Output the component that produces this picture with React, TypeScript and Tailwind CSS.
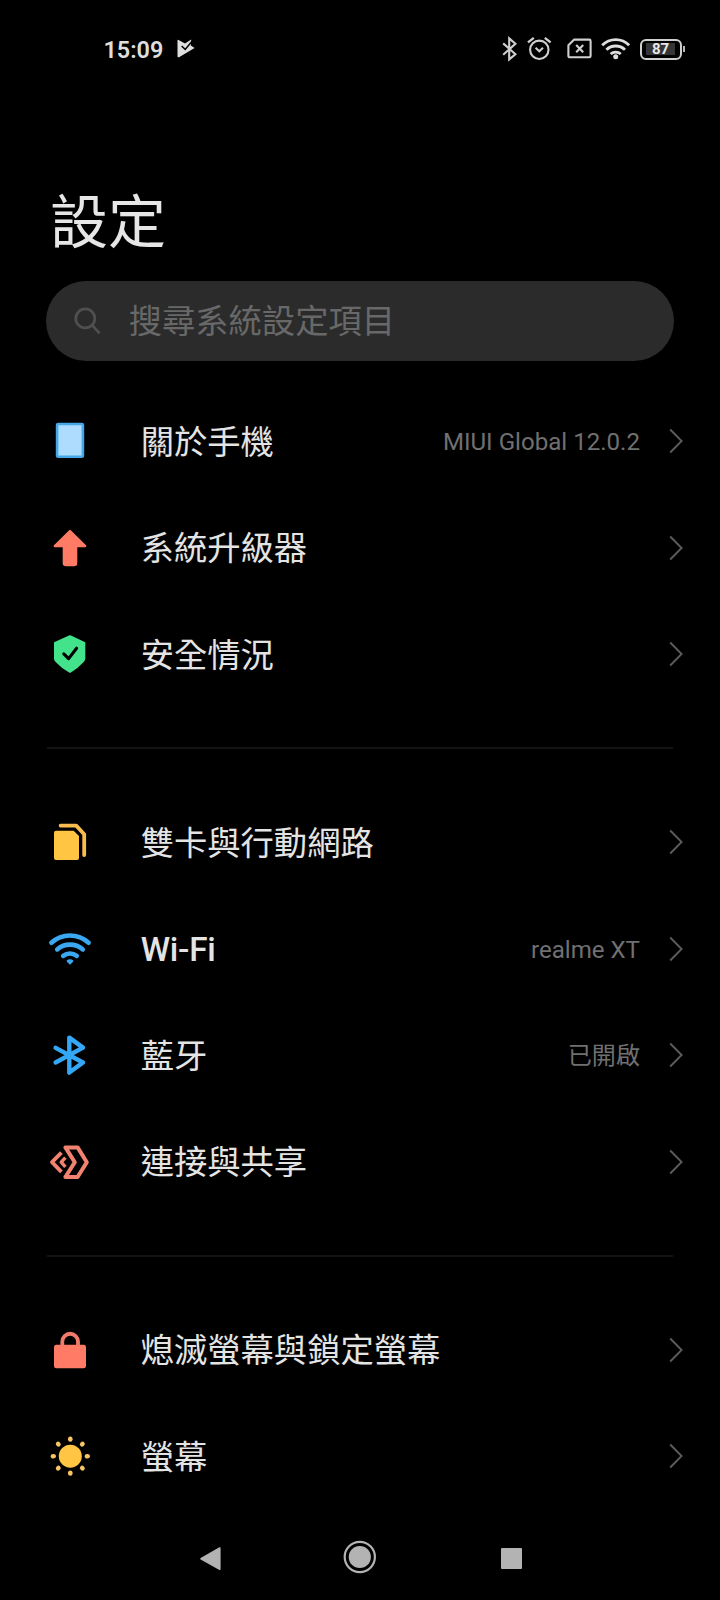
import type { ReactNode } from "react";

type RowData = { label: string; icon: ReactNode; value?: string; medium?: boolean };

const box = { width: 48, height: 48, viewBox: "0 0 48 48", fill: "none" } as const;

const PhoneIcon = () => (
  <svg {...box}>
    <rect x="11.1" y="7" width="25.8" height="32.8" rx="1" fill="#addcff" stroke="#46a6e6" strokeWidth="2.6" strokeLinejoin="round" />
  </svg>
);

const UpdateIcon = () => (
  <svg {...box}>
    <path d="M24 7 L39.2 22 H30.1 V39 Q30.1 41 28.1 41 H19.9 Q17.9 41 17.9 39 V22 H8.8 Z" fill="#ff7b66" stroke="#ff7b66" strokeWidth="2.4" strokeLinejoin="round" />
  </svg>
);

const ShieldIcon = () => (
  <svg {...box}>
    <path d="M24 6.2 L38.3 12.9 V28.5 Q38.3 30 37.2 31 Q31.5 37.4 24 41.8 Q16 37.4 10.1 31 Q9 30 9 28.5 V12.9 Z" fill="#43e38c" stroke="#43e38c" strokeWidth="2" strokeLinejoin="round" />
    <path d="M17.8 23.9 L22.6 28.6 L30.6 18.2" stroke="#000" strokeWidth="3.1" strokeLinecap="round" strokeLinejoin="round" />
  </svg>
);

const SimIcon = () => (
  <svg {...box}>
    <path d="M10 12.8 H27.6 L33 18 V39.9 Q33 42 31 42 H10 Q8 42 8 39.9 V14.8 Q8 12.8 10 12.8 Z" fill="#ffc543" />
    <path d="M14.6 7.6 H30.2 L38.2 16.2 V37" stroke="#f9bd4f" strokeWidth="3.8" strokeLinecap="round" strokeLinejoin="round" />
  </svg>
);

const WifiIcon = () => (
  <svg {...box}>
    <g stroke="#3ba7f0" strokeWidth="4.6" strokeLinecap="round">
      <path d="M5.4 17.8 A27.5 27.5 0 0 1 42.6 17.8" />
      <path d="M11.2 24.4 A19.6 19.6 0 0 1 36.8 24.4" />
      <path d="M17.2 30.9 A11.5 11.5 0 0 1 30.8 30.9" />
    </g>
    <path d="M20.6 35.6 Q24 32.8 27.4 35.6 Q27.6 36.8 24 39.8 Q20.4 36.8 20.6 35.6 Z" fill="#3ba7f0" />
  </svg>
);

const BluetoothIcon = () => (
  <svg {...box}>
    <path d="M9.6 16.9 L37 31.5 L23.3 41.6 V6.6 L37 16.6 L9.6 31.5" stroke="#35a7f7" strokeWidth="4.4" strokeLinecap="round" strokeLinejoin="round" />
  </svg>
);

const ShareIcon = () => (
  <svg {...box}>
    <g stroke="#f28370" strokeWidth="4" strokeLinejoin="round">
      <path d="M19.4 9.4 H31.6 L40.8 24.2 L31.6 39 H19.4 L28.8 24.2 Z" />
      <path d="M15.4 14.6 L6 24.2 L15.4 33.8" strokeWidth="3.8" />
      <path d="M19.4 19.6 L15.2 24.2 L19.4 28.8" strokeWidth="3.4" />
    </g>
  </svg>
);

const LockIcon = () => (
  <svg {...box}>
    <rect x="8" y="18.7" width="32" height="23.6" rx="2.4" fill="#ff7b66" />
    <path d="M16.3 20 V15.6 A7.8 7.8 0 0 1 32 15.6 V20" stroke="#f07b68" strokeWidth="3.8" />
  </svg>
);

const SunIcon = () => (
  <svg {...box}>
    <circle cx="24.3" cy="24.2" r="11.5" fill="#ffc543" />
    <g fill="#f8c466">
      {[0, 45, 90, 135, 180, 225, 270, 315].map((angle) => (
        <ellipse key={angle} cx="24.3" cy="7.2" rx="2.3" ry="2.6" transform={`rotate(${angle} 24.3 24.2)`} />
      ))}
    </g>
  </svg>
);

const groups: RowData[][] = [
  [
    { label: "關於手機", icon: <PhoneIcon />, value: "MIUI Global 12.0.2" },
    { label: "系統升級器", icon: <UpdateIcon /> },
    { label: "安全情況", icon: <ShieldIcon /> },
  ],
  [
    { label: "雙卡與行動網路", icon: <SimIcon /> },
    { label: "Wi-Fi", icon: <WifiIcon />, value: "realme XT", medium: true },
    { label: "藍牙", icon: <BluetoothIcon />, value: "已開啟" },
    { label: "連接與共享", icon: <ShareIcon /> },
  ],
  [
    { label: "熄滅螢幕與鎖定螢幕", icon: <LockIcon /> },
    { label: "螢幕", icon: <SunIcon /> },
  ],
];

function Row({ label, icon, value, medium }: RowData) {
  return (
    <li className="flex h-[106.5px] items-center pr-[37.5px] pl-[46px]">
      {icon}
      <span className={`ml-[46.7px] flex-1 pt-[2.5px] text-[33.3px] leading-none whitespace-nowrap text-[#e4e4e4] ${medium ? "font-medium tracking-[-0.2px]" : ""}`}>{label}</span>
      {value && <span className="mr-[28.5px] pt-[2.8px] text-[24.1px] leading-none whitespace-nowrap text-[#707070]">{value}</span>}
      <svg width="14" height="26" viewBox="0 0 14 26" fill="none">
        <path d="M1.2 1.5 L12.6 13 L1.2 24.5" stroke="#5c5c5c" strokeWidth="1.9" />
      </svg>
    </li>
  );
}

function StatusBar() {
  return (
    <header className="flex h-[98px] items-center pr-[35px] pl-[103.5px] text-[#dedede]">
      <span className="pt-[3px] text-[23.4px] leading-none font-semibold">15:09</span>
      <svg className="ml-[13.5px]" width="18" height="20" viewBox="0 0 18 20" fill="none">
        <path d="M0.5 1.5 Q0.5 0.5 1.5 1 L8 4.4 L14.2 0.6 L13.8 6.6 L17.6 9 L2 18.2 Q0.5 18.8 0.5 17.2 Z" fill="#dedede" />
        <path d="M4.6 7 L8.2 10.4 L14.8 2.6" stroke="#000" strokeWidth="1.5" />
      </svg>
      <div className="ml-auto flex items-center">
        <svg width="16" height="26" viewBox="0 0 16 26" fill="none">
          <path d="M1.2 7.4 L13.4 18.2 L7.2 23.4 V2.4 L13.4 7.8 L1.2 18.8" stroke="#cfcfcf" strokeWidth="2.1" />
        </svg>
        <svg className="ml-[8px]" width="26" height="26" viewBox="0 0 26 26" fill="none" stroke="#cfcfcf" strokeWidth="2.1">
          <circle cx="13.3" cy="13.8" r="9.2" />
          <path d="M9.6 11.8 L13.3 15.2 L17 11.8" />
          <path d="M2 6.4 L7.8 1.9 M24.6 6.4 L18.8 1.9" strokeWidth="2.4" />
        </svg>
        <svg className="ml-[15px]" width="26" height="26" viewBox="0 0 26 26" fill="none" stroke="#cfcfcf" strokeWidth="2.1">
          <path d="M7.2 3.6 H22.2 Q23.6 3.6 23.6 5 V20 Q23.6 21.2 22.2 21.2 H2.8 Q1.4 21.2 1.4 20 V9.2 Z" strokeLinejoin="round" />
          <path d="M9.2 9 L16.2 16.2 M16.2 9 L9.2 16.2" />
        </svg>
        <svg className="ml-[8px]" width="30" height="26" viewBox="0 0 30 26" fill="none">
          <g stroke="#dedede" strokeWidth="2.8">
            <path d="M1.2 9.2 A19 19 0 0 1 28.2 9.2" />
            <path d="M5.4 13.8 A13.3 13.3 0 0 1 24 13.8" />
            <path d="M9.6 18 A7.6 7.6 0 0 1 19.8 18" />
          </g>
          <circle cx="14.7" cy="20.8" r="2.5" fill="#dedede" />
        </svg>
        <div className="ml-[8.5px] flex h-[21px] w-[42px] items-center justify-center rounded-[6px] border-[2.5px] border-[#cfcfcf]">
          <span className="flex h-[12px] w-[29px] items-center justify-center bg-[#353535] pt-px text-[15px] leading-none font-bold text-[#e8e8e8]">87</span>
        </div>
        <div className="ml-[1px] h-[6px] w-[2.5px] bg-[#b8b8b8]" />
      </div>
    </header>
  );
}

export default function App() {
  return (
    <div className="flex h-[1600px] w-[720px] flex-col overflow-hidden bg-black font-['Roboto','Noto_Sans_CJK_TC',sans-serif]">
      <StatusBar />
      <h1 className="mt-[84px] flex h-[80px] items-center pt-[2px] pl-[50px] text-[58px] leading-none text-[#e6e6e6]">設定</h1>
      <div className="mt-[18.5px] mr-[46px] ml-[46px] flex h-[80px] shrink-0 items-center rounded-full bg-[#2b2b2b] pl-[27px]">
        <svg width="30" height="30" viewBox="0 0 30 30" fill="none" stroke="#4f4f4f" strokeWidth="2.8">
          <circle cx="12.3" cy="12.4" r="9.5" />
          <path d="M19.2 19.4 L26.6 27.2" />
        </svg>
        <span className="ml-[25.7px] pt-[2px] text-[33.3px] leading-none text-[#686868]">搜尋系統設定項目</span>
      </div>
      <main className="mt-[27.25px]">
        {groups.map((rows, i) => (
          <section key={i}>
            {i > 0 && <hr className="mx-[47px] my-[39.75px] h-[2px] border-0 bg-[#131313]" />}
            <ul>
              {rows.map((row) => (
                <Row key={row.label} {...row} />
              ))}
            </ul>
          </section>
        ))}
      </main>
      <nav className="mt-auto flex h-[86px] shrink-0 items-center pl-[198.5px]">
        <svg width="23" height="26" viewBox="0 0 23 26">
          <path d="M2 14.8 L20.8 4 V25.2 Z" fill="#b3b3b3" stroke="#b3b3b3" strokeWidth="1.6" strokeLinejoin="round" />
        </svg>
        <svg className="ml-[121px]" width="34" height="34" viewBox="0 0 34 34">
          <circle cx="16.8" cy="17" r="15.1" fill="none" stroke="#b3b3b3" strokeWidth="2.2" />
          <circle cx="16.8" cy="17" r="11.1" fill="#b3b3b3" />
        </svg>
        <div className="mt-[3px] ml-[124.5px] size-[21px] rounded-[1px] bg-[#b3b3b3]" />
      </nav>
    </div>
  );
}
